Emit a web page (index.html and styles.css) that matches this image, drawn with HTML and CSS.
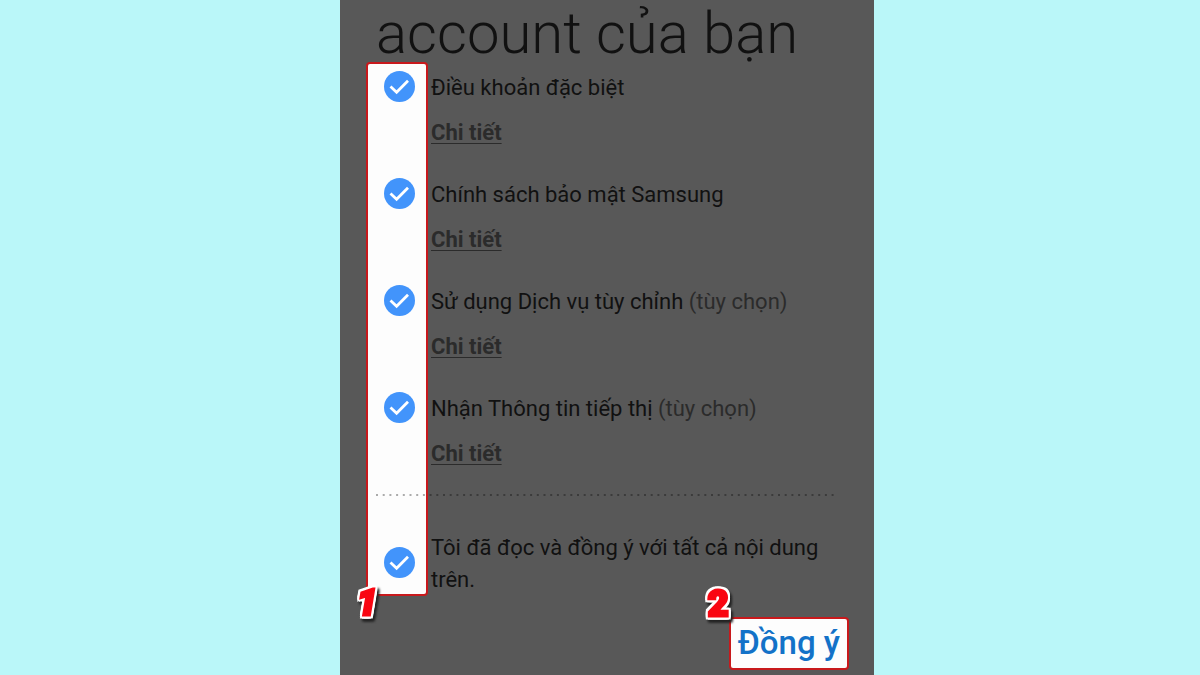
FILE: index.html
```html
<!DOCTYPE html>
<html lang="vi">
<head>
<meta charset="utf-8">
<meta name="viewport" content="width=device-width, initial-scale=1">
<title>Samsung account</title>
<link rel="stylesheet" href="styles.css">
</head>
<body>
<svg class="defs" aria-hidden="true">
  <symbol id="tick" viewBox="0 0 31 31">
    <circle cx="15.500" cy="15.500" r="15.500" fill="#4294fb"/>
    <path d="M6.500 15.500 12.600 21.200 24 9.700" fill="none" stroke="#fff" stroke-width="2.800"/>
  </symbol>
</svg>
<main class="screen">
  <h1 class="title">account của bạn</h1>
  <form class="terms">
    <div class="item">
      <span class="check"><input type="checkbox" id="special" checked><svg><use href="#tick"/></svg></span>
      <label class="label" for="special">Điều khoản đặc biệt</label>
      <a class="detail" href="#special">Chi tiết</a>
    </div>
    <div class="item">
      <span class="check"><input type="checkbox" id="privacy" checked><svg><use href="#tick"/></svg></span>
      <label class="label" for="privacy">Chính sách bảo mật Samsung</label>
      <a class="detail" href="#privacy">Chi tiết</a>
    </div>
    <div class="item">
      <span class="check"><input type="checkbox" id="custom" checked><svg><use href="#tick"/></svg></span>
      <label class="label" for="custom">Sử dụng Dịch vụ tùy chỉnh <span class="optional">(tùy chọn)</span></label>
      <a class="detail" href="#custom">Chi tiết</a>
    </div>
    <div class="item">
      <span class="check"><input type="checkbox" id="marketing" checked><svg><use href="#tick"/></svg></span>
      <label class="label" for="marketing">Nhận Thông tin tiếp thị <span class="optional">(tùy chọn)</span></label>
      <a class="detail" href="#marketing">Chi tiết</a>
    </div>
    <svg class="divider" aria-hidden="true"><line x1="0" y1="1" x2="100%" y2="1"/></svg>
    <div class="item agree-all">
      <span class="check"><input type="checkbox" id="all" checked><svg><use href="#tick"/></svg></span>
      <label class="label" for="all">Tôi đã đọc và đồng ý với tất cả nội dung trên.</label>
    </div>
    <span class="step step-one">1</span>
  </form>
  <div class="actions">
    <button class="agree" type="button">Đồng ý</button>
    <span class="step step-two">2</span>
  </div>
</main>
</body>
</html>
```
FILE: styles.css
```css
*, *::before { box-sizing: border-box; }

body {
  margin: 0;
  min-height: 100vh;
  display: grid;
  grid-template-columns: 340fr minmax(480px, 534fr) 326fr;
  background: #baf7f9;
  font-family: Roboto, "Noto Sans", sans-serif;
  font-size: 22px;
  line-height: 32px;
  color: #111;
}

.defs { position: absolute; width: 0; height: 0; }

.screen {
  grid-column: 2;
  padding: 0 25px 0 36px;
  background: #585858;
}

.title {
  margin: 0;
  padding-top: 4px;
  font-size: 58px;
  line-height: 58px;
  font-weight: 300;
  white-space: nowrap;
}

.terms {
  position: relative;
  z-index: 0;
  padding-top: 10px;
}

.terms::before {
  content: "";
  position: absolute;
  z-index: -1;
  top: 0;
  bottom: 0;
  left: -10px;
  width: 62px;
  background: #fdfdfd;
  border: 2px solid #c8191c;
  border-radius: 4px;
}

.item {
  display: grid;
  grid-template-columns: 47px 1fr;
  column-gap: 8px;
  row-gap: 13px;
  margin-bottom: 30px;
}

.check {
  position: relative;
  align-self: center;
  width: 31px;
  height: 31px;
  margin: -1px 0 2px 8px;
}

.check input {
  appearance: none;
  position: absolute;
  inset: 0;
  margin: 0;
  border-radius: 50%;
}

.check svg {
  display: block;
  width: 31px;
  height: 31px;
  pointer-events: none;
}

.optional { color: #2b2b2b; }

.detail {
  grid-column: 2;
  justify-self: start;
  color: #2b2b2b;
  font-weight: 700;
  text-decoration-thickness: 1px;
  text-underline-offset: 3px;
}

.divider {
  display: block;
  width: 458px;
  max-width: 100%;
  height: 2px;
  margin-top: -6px;
}

.divider line {
  stroke: #000;
  stroke-opacity: .32;
  stroke-width: 2;
  stroke-dasharray: 2 4.700;
}

.agree-all { margin: 36px 0 0; }

.actions {
  position: relative;
  width: max-content;
  margin: 21px 0 5px auto;
}

.agree {
  display: block;
  padding: 3px 7px 5px;
  background: #fdfdfd;
  border: 2px solid #c8191c;
  border-radius: 4px;
  color: #1372c8;
  font: 500 33px/41px Roboto, "Noto Sans", sans-serif;
}

.step {
  position: absolute;
  color: #f90612;
  font: 900 36px/32px Roboto, sans-serif;
  -webkit-text-stroke: 3px #f90612;
  filter: drop-shadow(2px 0 0 #fff) drop-shadow(-2px 0 0 #fff) drop-shadow(0 2px 0 #fff) drop-shadow(0 -2px 0 #fff) drop-shadow(2px 3px 1px #222);
}

.step-one { left: -19px; bottom: -23px; font-style: italic; }
.step-two { left: -21px; top: -29px; }
```
